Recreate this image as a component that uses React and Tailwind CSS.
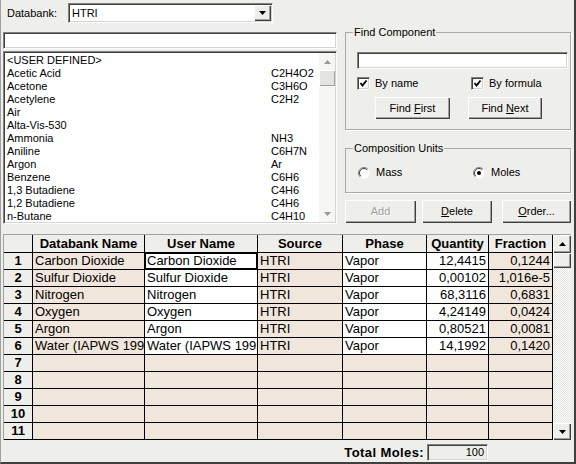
import React from 'react';

const components = [
  ['<USER DEFINED>', ''],
  ['Acetic Acid', 'C2H4O2'],
  ['Acetone', 'C3H6O'],
  ['Acetylene', 'C2H2'],
  ['Air', ''],
  ['Alta-Vis-530', ''],
  ['Ammonia', 'NH3'],
  ['Aniline', 'C6H7N'],
  ['Argon', 'Ar'],
  ['Benzene', 'C6H6'],
  ['1,3 Butadiene', 'C4H6'],
  ['1,2 Butadiene', 'C4H6'],
  ['n-Butane', 'C4H10'],
];

const rows = [
  ['Carbon Dioxide', 'Carbon Dioxide', 'HTRI', 'Vapor', '12,4415', '0,1244'],
  ['Sulfur Dioxide', 'Sulfur Dioxide', 'HTRI', 'Vapor', '0,00102', '1,016e-5'],
  ['Nitrogen', 'Nitrogen', 'HTRI', 'Vapor', '68,3116', '0,6831'],
  ['Oxygen', 'Oxygen', 'HTRI', 'Vapor', '4,24149', '0,0424'],
  ['Argon', 'Argon', 'HTRI', 'Vapor', '0,80521', '0,0081'],
  ['Water (IAPWS 1995)', 'Water (IAPWS 1995)', 'HTRI', 'Vapor', '14,1992', '0,1420'],
];

const sunken =
  'border border-t-[#808080] border-l-[#808080] border-b-white border-r-white shadow-[inset_1px_1px_0_#404040,inset_-1px_-1px_0_#d4d4d0]';
const raised =
  'bg-[#eeeeea] shadow-[inset_1px_1px_0_#ffffff,inset_-1px_-1px_0_#404040,inset_-2px_-2px_0_#a0a0a0]';
const cols = 'grid grid-cols-[29px_112px_113px_85px_84px_62px_64px]';

const Arrow = ({ up, color = '#000' }) => (
  <svg width="7" height="4" viewBox="0 0 7 4">
    <path d={up ? 'M0 4 L3.5 0 L7 4 Z' : 'M0 0 L3.5 4 L7 0 Z'} fill={color} />
  </svg>
);

const Check = ({ label }) => (
  <div className="flex items-center h-[13px]">
    <div className={`w-[13px] h-[13px] bg-white flex items-center justify-center ${sunken}`}>
      <svg width="9" height="9" viewBox="0 0 9 9">
        <polyline points="1.5,4 3.5,6.5 7.5,1.5" fill="none" stroke="#000" strokeWidth="1.8" />
      </svg>
    </div>
    <span className="ml-[5px]">{label}</span>
  </div>
);

const Radio = ({ label, on }) => (
  <div className="flex items-center h-[13px]">
    <svg width="12" height="12" viewBox="0 0 12 12">
      <circle cx="6" cy="6" r="5.5" fill="#ffffff" />
      <path d="M2.1 9.9 A5.5 5.5 0 0 1 9.9 2.1" fill="none" stroke="#808080" strokeWidth="1" />
      <path d="M2.8 9.2 A4.5 4.5 0 0 1 9.2 2.8" fill="none" stroke="#404040" strokeWidth="1" />
      {on && <circle cx="6" cy="6" r="2" fill="#000" />}
    </svg>
    <span className="ml-[6px]">{label}</span>
  </div>
);

const Button = ({ children, w, disabled }) => (
  <button
    className={`${raised} ${w} h-full flex items-center justify-center ${
      disabled ? 'text-[#a0a0a0] [text-shadow:1px_1px_0_#fff]' : 'text-black'
    }`}
  >
    <span>{children}</span>
  </button>
);

const Cell = ({ children, white, right, focus }) => (
  <div
    className={`h-[17px] border-r border-b border-black overflow-hidden whitespace-nowrap leading-[16px] ${
      right ? 'text-right pr-[2px]' : 'pl-[2px]'
    } ${white ? 'bg-white' : 'bg-[#f0e6dc]'} ${focus ? 'shadow-[inset_0_0_0_1px_#000]' : ''}`}
  >
    {children}
  </div>
);

export default function App() {
  return (
    <div
      className="w-[576px] h-[464px] bg-[#eeeeea] text-[11px] text-black flex flex-col border-l border-l-[#a0a0a0] border-r-2 border-b-2 border-r-[#404040] border-b-[#404040]"
      style={{ fontFamily: '"Liberation Sans", Arial, sans-serif' }}
    >
      {/* databank */}
      <div className="flex items-center h-[20px] mt-[3px] ml-[6px]">
        <span className="w-[61px]">Databank:</span>
        <div className={`w-[205px] h-[20px] bg-white flex items-center ${sunken}`}>
          <span className="flex-1 pl-[3px]">HTRI</span>
          <div className={`${raised} w-[17px] h-[16px] mr-[1px] flex items-center justify-center`}>
            <Arrow />
          </div>
        </div>
      </div>

      <div className="flex mt-[3px]">
        {/* component list */}
        <div className="w-[334px] ml-[2px] pt-[6px] flex flex-col">
          <div className={`h-[17px] bg-white ${sunken}`} />
          <div className={`mt-[2px] h-[173px] bg-white flex ${sunken} p-[1px]`}>
            <div className="flex-1 pt-[1px] pl-[2px]">
              {components.map(([name, formula]) => (
                <div key={name} className="grid grid-cols-[264px_1fr] h-[13px] leading-[13px]">
                  <span>{name}</span>
                  <span>{formula}</span>
                </div>
              ))}
            </div>
            <div className="w-[16px] bg-[#f6f6f2] flex flex-col">
              <div className="h-[17px] flex items-center justify-center">
                <Arrow up color="#9a9a9a" />
              </div>
              <div className="h-[16px] bg-[#e4e4e0] shadow-[inset_1px_1px_0_#ffffff,inset_-1px_-1px_0_#a0a0a0]" />
              <div className="flex-1" />
              <div className="h-[17px] flex items-center justify-center">
                <Arrow color="#9a9a9a" />
              </div>
            </div>
          </div>
        </div>

        {/* right side */}
        <div className="w-[226px] ml-[8px] flex flex-col">
          <fieldset className="border border-[#a8a8a4] shadow-[1px_1px_0_#ffffff] flex flex-col">
            <legend className="ml-[7px] px-[1px] leading-[13px]">Find Component</legend>
            <div className={`mt-[13px] ml-[11px] w-[211px] h-[17px] bg-white ${sunken}`} />
            <div className="flex mt-[8px] ml-[11px]">
              <div className="w-[114px]">
                <Check label="By name" />
              </div>
              <Check label="By formula" />
            </div>
            <div className="flex h-[22px] mt-[7px] mb-[10px] ml-[29px] gap-[18px]">
              <Button w="w-[75px]">
                Find <u>F</u>irst
              </Button>
              <Button w="w-[74px]">
                Find <u>N</u>ext
              </Button>
            </div>
          </fieldset>

          <fieldset className="mt-[12px] border border-[#a8a8a4] shadow-[1px_1px_0_#ffffff] flex flex-col">
            <legend className="ml-[7px] px-[1px] leading-[13px]">Composition Units</legend>
            <div className="flex mt-[11px] mb-[13px] ml-[12px]">
              <div className="w-[115px]">
                <Radio label="Mass" />
              </div>
              <Radio label="Moles" on />
            </div>
          </fieldset>

          <div className="flex h-[23px] mt-[7px]">
            <Button w="w-[72px]" disabled>
              Add
            </Button>
            <div className="ml-[6px]">
              <Button w="w-[70px]">
                <u>D</u>elete
              </Button>
            </div>
            <div className="ml-[10px]">
              <Button w="w-[69px]">
                <u>O</u>rder...
              </Button>
            </div>
          </div>
        </div>
      </div>

      {/* composition grid */}
      <div
        className="mt-[10px] ml-[2px] w-[568px] flex border-l border-t border-[#a0a0a0] text-[13px]"
        style={{ fontFamily: 'Arial, "Liberation Sans", sans-serif' }}
      >
        <div>
          <div className={`${cols} h-[18px] font-bold text-center leading-[17px]`}>
            <div className="border-r border-b border-black" />
            <div className="border-r border-b border-black">Databank Name</div>
            <div className="border-r border-b border-black">User Name</div>
            <div className="border-r border-b border-black">Source</div>
            <div className="border-r border-b border-black">Phase</div>
            <div className="border-r border-b border-black">Quantity</div>
            <div className="border-r border-b border-black">Fraction</div>
          </div>
          {Array.from({ length: 11 }, (_, i) => {
            const r = rows[i];
            return (
              <div key={i} className={cols}>
                <div className="h-[17px] border-r border-b border-black text-center font-bold leading-[16px]">
                  {i + 1}
                </div>
                <Cell>{r && r[0]}</Cell>
                <Cell white={!!r} focus={i === 0}>
                  {r && r[1]}
                </Cell>
                <Cell>{r && r[2]}</Cell>
                <Cell white={!!r}>{r && r[3]}</Cell>
                <Cell white={!!r} right>
                  {r && r[4]}
                </Cell>
                <Cell right>{r && r[5]}</Cell>
              </div>
            );
          })}
        </div>
        <div className="w-[18px] flex flex-col bg-[repeating-conic-gradient(#ffffff_0%_25%,#e2e2de_0%_50%)] bg-[length:2px_2px]">
          <div className={`${raised} h-[18px] flex items-center justify-center`}>
            <Arrow up />
          </div>
          <div className={`${raised} h-[15px]`} />
          <div className="flex-1" />
          <div className={`${raised} h-[17px] flex items-center justify-center`}>
            <Arrow />
          </div>
        </div>
      </div>

      {/* total */}
      <div className="flex items-center mt-[3px]">
        <div
          className="w-[423px] text-right font-bold text-[13px] tracking-[0.4px]"
          style={{ fontFamily: 'Arial, "Liberation Sans", sans-serif' }}
        >
          Total Moles:
        </div>
        <div className={`ml-[3px] w-[61px] h-[17px] leading-[14px] text-right pr-[3px] ${sunken}`}>100</div>
      </div>
    </div>
  );
}
